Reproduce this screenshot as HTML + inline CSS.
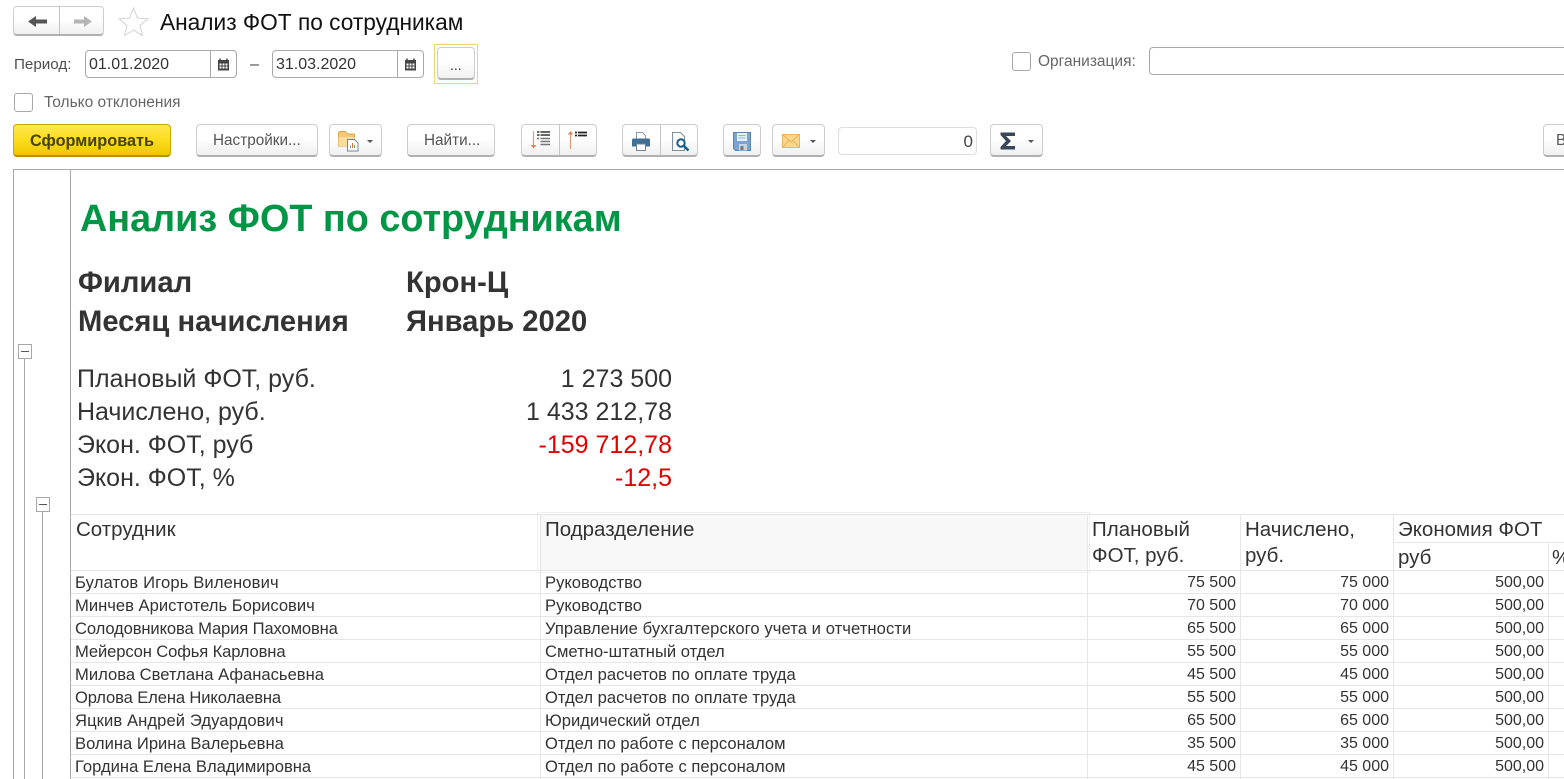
<!DOCTYPE html>
<html lang="ru"><head><meta charset="utf-8"><title>Анализ ФОТ по сотрудникам</title>
<style>
html,body{margin:0;padding:0;background:#fff;width:1564px;height:779px;overflow:hidden}
body{position:relative;font-family:"Liberation Sans",Arial,sans-serif;color:#333}
.t{position:absolute;white-space:nowrap;line-height:1}
.r{text-align:right}
.a{position:absolute;box-sizing:border-box}
.btn{position:absolute;box-sizing:border-box;border:1px solid #cdcdcd;border-bottom:2px solid #b0b0b0;border-radius:4px;background:linear-gradient(#fff 0,#fff 45%,#f0f0f0 100%);top:124px;height:33px}
.lbl{font-size:15.200px;color:#4d4d4d}
.inp{position:absolute;box-sizing:border-box;border:1px solid #a8a8a8;border-radius:4px;background:#fff}
.cb{position:absolute;box-sizing:border-box;border:1px solid #a8a8a8;border-radius:3px;background:#fff}
.h{position:absolute;background:#e6e6e6;height:1px}
.v{position:absolute;background:#e6e6e6;width:1px}
.row{font-size:16.600px;color:#333;margin-top:1px}
.num{font-size:16px;color:#333}
.hd{font-size:20.500px;color:#333;margin-top:1px}
.big{font-size:25px;color:#333}
.bold{font-size:29.200px;font-weight:bold;color:#333;margin-top:1px}
.red{color:#e00000}
svg{position:absolute;display:block}
.sep{position:absolute;top:125px;height:30px;width:1px;background:#c4c4c4}
</style></head><body>

<div class="btn" style="left:13px;top:6px;width:91px;height:30px"></div>
<div class="sep" style="left:59px;top:7px;height:27px"></div>
<svg style="left:28px;top:14px" width="20" height="15" viewBox="0 0 20 15"><path d="M0 7.500L8 2v3.500h11v4H8V13z" fill="#555"/></svg>
<svg style="left:73px;top:14px" width="20" height="15" viewBox="0 0 20 15"><path d="M19 7.500L11 2v3.500H1v4h10V13z" fill="#b5b5b5"/></svg>
<svg style="left:118px;top:7px" width="31" height="29" viewBox="0 0 31 29"><path d="M15.500 1l4 10 10.500 .8-8 6.800 2.500 10-9-5.500-9 5.500 2.500-10-8-6.800 10.500-.8z" fill="#fff" stroke="#d2d2d2"/></svg>
<div class="t" style="left:160px;top:11px;font-size:22.700px;color:#111">Анализ ФОТ по сотрудникам</div>

<div class="t lbl" style="left:14px;top:57px">Период:</div>
<div class="inp" style="left:85px;top:50px;width:152px;height:28px"></div>
<div class="a" style="left:210px;top:51px;width:1px;height:26px;background:#a8a8a8"></div>
<div class="t" style="left:89px;top:57px;font-size:16px;color:#333">01.01.2020</div>
<svg style="left:217px;top:58px" width="13" height="13" viewBox="0 0 13 13"><path d="M1 2h11v10.500H1z" fill="#444"/><path d="M3 .5v3M10 .5v3" stroke="#444" stroke-width="1.500"/><path d="M2.500 5.500h2v2h-2zM5.500 5.500h2v2h-2zM8.500 5.500h2v2h-2zM2.500 8.500h2v2h-2zM5.500 8.500h2v2h-2zM8.500 8.500h2v2h-2z" fill="#fff"/></svg>
<div class="t" style="left:250px;top:57px;font-size:16px;color:#444">–</div>
<div class="inp" style="left:272px;top:50px;width:152px;height:28px"></div>
<div class="a" style="left:397px;top:51px;width:1px;height:26px;background:#a8a8a8"></div>
<div class="t" style="left:276px;top:57px;font-size:16px;color:#333">31.03.2020</div>
<svg style="left:404px;top:58px" width="13" height="13" viewBox="0 0 13 13"><path d="M1 2h11v10.500H1z" fill="#444"/><path d="M3 .5v3M10 .5v3" stroke="#444" stroke-width="1.500"/><path d="M2.500 5.500h2v2h-2zM5.500 5.500h2v2h-2zM8.500 5.500h2v2h-2zM2.500 8.500h2v2h-2zM5.500 8.500h2v2h-2zM8.500 8.500h2v2h-2z" fill="#fff"/></svg>
<div class="a" style="left:434px;top:44px;width:44px;height:40px;border:1px solid #ecd96a"></div>
<div class="btn" style="left:437px;top:47px;width:38px;height:33px"></div>
<div class="t" style="left:450px;top:58px;font-size:14px;color:#333">...</div>

<div class="cb" style="left:1012px;top:52px;width:19px;height:19px"></div>
<div class="t lbl" style="left:1038px;top:54px;font-size:15.500px;color:#666">Организация:</div>
<div class="inp" style="left:1149px;top:47px;width:430px;height:28px"></div>

<div class="cb" style="left:14px;top:93px;width:19px;height:19px"></div>
<div class="t lbl" style="left:44px;top:95px;font-size:15.500px;color:#666">Только отклонения</div>

<div class="btn" style="left:13px;width:158px;border:1px solid #c9a800;border-bottom:2px solid #b39500;background:linear-gradient(#ffe94d 0,#fbdc1e 50%,#eec800 100%)"></div>
<div class="t" style="left:30px;top:133px;font-size:16.300px;font-weight:bold;color:#4b4200">Сформировать</div>
<div class="btn" style="left:196px;width:122px"></div>
<div class="t" style="left:213px;top:133px;font-size:15.300px;color:#555">Настройки...</div>
<div class="btn" style="left:329px;width:53px"></div>
<svg style="left:338px;top:130px" width="24" height="22" viewBox="0 0 24 22"><path d="M.5 3.500Q.5 1.500 2.500 1.500h5l2 2.500h7v12h-16z" fill="#f3c878" stroke="#dca54e"/><path d="M.5 7h16v9h-16z" fill="#f9dc9e"/><path d="M9.500 9.500h7l3.500 3.500v8h-10.500z" fill="#fff" stroke="#6f8494"/><path d="M12.500 18v-2.500" stroke="#5a8fb5"/><path d="M14.500 18v-5" stroke="#d0703c"/><path d="M16.500 18v-3" stroke="#7a9a50"/></svg>
<svg style="left:367px;top:140px" width="6" height="3" viewBox="0 0 6 3"><path d="M0 0h6L3 3z" fill="#555"/></svg>
<div class="btn" style="left:407px;width:88px"></div>
<div class="t" style="left:424px;top:133px;font-size:15.300px;color:#555">Найти...</div>

<div class="btn" style="left:521px;width:76px"></div>
<div class="sep" style="left:559px"></div>
<svg style="left:530px;top:130px" width="22" height="20" viewBox="0 0 22 20"><path d="M3.500 1v15" stroke="#e29b78" stroke-width="1.200"/><path d="M.8 15h5.400l-2.700 3.500z" fill="#dd8050"/><path d="M7 2h2.500M10.500 2H20M7 5h2.500M10.500 5H20" stroke="#333" stroke-width="1.600"/><path d="M7 8.500h2M10.500 8.500H20M10.500 11.500H20M10.500 14.500H20" stroke="#777" stroke-width="1.500"/></svg>
<svg style="left:567px;top:130px" width="22" height="20" viewBox="0 0 22 20"><path d="M3.500 3v16" stroke="#e29b78" stroke-width="1.200"/><path d="M.8 4.500h5.400L3.500 1z" fill="#dd8050"/><path d="M8 2.500h2M11 2.500h9M8 5.500h2M11 5.500h9" stroke="#222" stroke-width="1.700"/></svg>

<div class="btn" style="left:622px;width:76px"></div>
<div class="sep" style="left:660px"></div>
<svg style="left:631px;top:131px" width="20" height="21" viewBox="0 0 20 21"><path d="M5.500 1.500h6l3 3v4h-9z" fill="#fff" stroke="#8a9aa6"/><path d="M1 9q0-1.500 1.500-1.500h15Q19 7.500 19 9v6.500H1z" fill="#3f6f95"/><path d="M5.500 13h9v6.500h-9z" fill="#fff" stroke="#6d8494"/></svg>
<svg style="left:670px;top:131px" width="20" height="21" viewBox="0 0 20 21"><path d="M2.500 1.500h8l4 4v14h-12z" fill="#fff" stroke="#7d8f9c"/><circle cx="11" cy="12" r="3.700" fill="#fff" stroke="#135f8e" stroke-width="2"/><path d="M13.500 14.500l5 5" stroke="#135f8e" stroke-width="2.500"/></svg>

<div class="btn" style="left:723px;width:38px"></div>
<svg style="left:733px;top:132px" width="18" height="19" viewBox="0 0 18 19"><path d="M.5.500h17v18h-15l-2-2z" fill="#7ba5d0" stroke="#5a86ad"/><path d="M4 1h10v8H4z" fill="#e8f0f7"/><path d="M5.500 3.500h7M5.500 6h7" stroke="#9ab2c8"/><path d="M6 12h8v6.500H6z" fill="#c9d3db"/><path d="M7.500 14h3v4h-3z" fill="#6a7c8c"/></svg>
<div class="btn" style="left:772px;width:53px"></div>
<svg style="left:782px;top:134px" width="18" height="14" viewBox="0 0 18 14"><path d="M.5.500h17v13H.5z" fill="#fad78c" stroke="#e8b562"/><path d="M.5.500L9 8l8.500-7.500M.5 13.500L7 6.500M17.500 13.500L11 6.500" fill="none" stroke="#e8b562"/></svg>
<svg style="left:810px;top:140px" width="6" height="3" viewBox="0 0 6 3"><path d="M0 0h6L3 3z" fill="#555"/></svg>

<div class="inp" style="left:838px;top:127px;width:139px;height:28px;border-color:#dedede"></div>
<div class="t r" style="left:899px;width:74px;top:133px;font-size:17px;color:#444">0</div>
<div class="btn" style="left:990px;width:53px"></div>
<svg style="left:1000px;top:132px" width="16" height="18" viewBox="0 0 16 18"><path d="M.5.500h14.500v3.500H6l5 5-5 5h9v3.500H.5v-2.500L6 9 .5 3z" fill="#38485a"/></svg>
<svg style="left:1028px;top:140px" width="6" height="3" viewBox="0 0 6 3"><path d="M0 0h6L3 3z" fill="#555"/></svg>
<div class="btn" style="left:1543px;width:40px"></div>
<div class="t" style="left:1556px;top:133px;font-size:15.300px;color:#555">В</div>

<div class="a" style="left:13px;top:169px;width:1551px;height:1px;background:#a8a8a8"></div>
<div class="a" style="left:13px;top:169px;width:1px;height:610px;background:#a8a8a8"></div>
<div class="a" style="left:70px;top:169px;width:1px;height:610px;background:#a8a8a8"></div>

<div class="a" style="left:24px;top:358px;width:1px;height:421px;background:#a8a8a8"></div>
<div class="a" style="left:42px;top:511px;width:1px;height:268px;background:#a8a8a8"></div>
<div class="a" style="left:18px;top:344px;width:14px;height:15px;border:1px solid #a8a8a8;background:#fff"><div class="a" style="left:2px;top:6px;width:8px;height:1px;background:#555"></div></div>
<div class="a" style="left:36px;top:497px;width:14px;height:15px;border:1px solid #a8a8a8;background:#fff"><div class="a" style="left:2px;top:6px;width:8px;height:1px;background:#555"></div></div>

<div class="t" style="left:80px;top:201px;font-size:37.800px;font-weight:bold;color:#009646">Анализ ФОТ по сотрудникам</div>
<div class="t bold" style="left:78px;top:268px">Филиал</div>
<div class="t bold" style="left:406px;top:268px">Крон-Ц</div>
<div class="t bold" style="left:78px;top:307px">Месяц начисления</div>
<div class="t bold" style="left:406px;top:307px">Январь 2020</div>

<div class="t big" style="left:77px;top:367px">Плановый ФОТ, руб.</div>
<div class="t big r" style="left:372px;width:300px;top:367px">1 273 500</div>
<div class="t big" style="left:77px;top:400px">Начислено, руб.</div>
<div class="t big r" style="left:372px;width:300px;top:400px">1 433 212,78</div>
<div class="t big" style="left:77px;top:433px">Экон. ФОТ, руб</div>
<div class="t big r red" style="left:372px;width:300px;top:433px">-159 712,78</div>
<div class="t big" style="left:77px;top:466px">Экон. ФОТ, %</div>
<div class="t big r red" style="left:372px;width:300px;top:466px">-12,5</div>

<!-- grid -->
<div class="a" style="left:537px;top:512px;width:553px;height:61px;border:1px solid #efefef"></div>
<div class="a" style="left:540px;top:514px;width:547px;height:56px;background:#f8f8f8"></div>
<div class="h" style="left:71px;top:514px;width:1493px"></div>
<div class="h" style="left:1393px;top:542px;width:171px"></div>
<div class="h" style="left:71px;top:570px;width:1493px"></div>
<div class="h" style="left:71px;top:593px;width:1493px"></div>
<div class="h" style="left:71px;top:616px;width:1493px"></div>
<div class="h" style="left:71px;top:639px;width:1493px"></div>
<div class="h" style="left:71px;top:662px;width:1493px"></div>
<div class="h" style="left:71px;top:685px;width:1493px"></div>
<div class="h" style="left:71px;top:708px;width:1493px"></div>
<div class="h" style="left:71px;top:731px;width:1493px"></div>
<div class="h" style="left:71px;top:754px;width:1493px"></div>
<div class="h" style="left:71px;top:777px;width:1493px"></div>
<div class="v" style="left:540px;top:514px;height:265px"></div>
<div class="v" style="left:1087px;top:514px;height:265px"></div>
<div class="v" style="left:1240px;top:514px;height:265px"></div>
<div class="v" style="left:1393px;top:514px;height:265px"></div>
<div class="v" style="left:1548px;top:542px;height:237px"></div>

<div class="t hd" style="left:76px;top:519px">Сотрудник</div>
<div class="t hd" style="left:545px;top:519px">Подразделение</div>
<div class="t hd" style="left:1092px;top:519px">Плановый</div>
<div class="t hd" style="left:1092px;top:545px">ФОТ, руб.</div>
<div class="t hd" style="left:1245px;top:519px">Начислено,</div>
<div class="t hd" style="left:1245px;top:545px">руб.</div>
<div class="t hd" style="left:1398px;top:519px">Экономия ФОТ</div>
<div class="t hd" style="left:1398px;top:547px">руб</div>
<div class="t hd" style="left:1552px;top:547px">%</div>

<div class="t row" style="left:75px;top:574px;letter-spacing:.13px">Булатов Игорь Виленович</div><div class="t row" style="left:545px;top:574px">Руководство</div><div class="t num r" style="left:1136px;width:100px;top:575px">75 500</div><div class="t num r" style="left:1289px;width:100px;top:575px">75 000</div><div class="t num r" style="left:1444px;width:100px;top:575px">500,00</div>
<div class="t row" style="left:75px;top:597px">Минчев Аристотель Борисович</div><div class="t row" style="left:545px;top:597px">Руководство</div><div class="t num r" style="left:1136px;width:100px;top:598px">70 500</div><div class="t num r" style="left:1289px;width:100px;top:598px">70 000</div><div class="t num r" style="left:1444px;width:100px;top:598px">500,00</div>
<div class="t row" style="left:75px;top:620px;letter-spacing:-.13px">Солодовникова Мария Пахомовна</div><div class="t row" style="left:545px;top:620px;letter-spacing:.07px">Управление бухгалтерского учета и отчетности</div><div class="t num r" style="left:1136px;width:100px;top:621px">65 500</div><div class="t num r" style="left:1289px;width:100px;top:621px">65 000</div><div class="t num r" style="left:1444px;width:100px;top:621px">500,00</div>
<div class="t row" style="left:75px;top:643px;letter-spacing:-.13px">Мейерсон Софья Карловна</div><div class="t row" style="left:545px;top:643px">Сметно-штатный отдел</div><div class="t num r" style="left:1136px;width:100px;top:644px">55 500</div><div class="t num r" style="left:1289px;width:100px;top:644px">55 000</div><div class="t num r" style="left:1444px;width:100px;top:644px">500,00</div>
<div class="t row" style="left:75px;top:666px">Милова Светлана Афанасьевна</div><div class="t row" style="left:545px;top:666px">Отдел расчетов по оплате труда</div><div class="t num r" style="left:1136px;width:100px;top:667px">45 500</div><div class="t num r" style="left:1289px;width:100px;top:667px">45 000</div><div class="t num r" style="left:1444px;width:100px;top:667px">500,00</div>
<div class="t row" style="left:75px;top:689px;letter-spacing:-.13px">Орлова Елена Николаевна</div><div class="t row" style="left:545px;top:689px">Отдел расчетов по оплате труда</div><div class="t num r" style="left:1136px;width:100px;top:690px">55 500</div><div class="t num r" style="left:1289px;width:100px;top:690px">55 000</div><div class="t num r" style="left:1444px;width:100px;top:690px">500,00</div>
<div class="t row" style="left:75px;top:712px;letter-spacing:.09px">Яцкив Андрей Эдуардович</div><div class="t row" style="left:545px;top:712px">Юридический отдел</div><div class="t num r" style="left:1136px;width:100px;top:713px">65 500</div><div class="t num r" style="left:1289px;width:100px;top:713px">65 000</div><div class="t num r" style="left:1444px;width:100px;top:713px">500,00</div>
<div class="t row" style="left:75px;top:735px">Волина Ирина Валерьевна</div><div class="t row" style="left:545px;top:735px">Отдел по работе с персоналом</div><div class="t num r" style="left:1136px;width:100px;top:736px">35 500</div><div class="t num r" style="left:1289px;width:100px;top:736px">35 000</div><div class="t num r" style="left:1444px;width:100px;top:736px">500,00</div>
<div class="t row" style="left:75px;top:758px">Гордина Елена Владимировна</div><div class="t row" style="left:545px;top:758px">Отдел по работе с персоналом</div><div class="t num r" style="left:1136px;width:100px;top:759px">45 500</div><div class="t num r" style="left:1289px;width:100px;top:759px">45 000</div><div class="t num r" style="left:1444px;width:100px;top:759px">500,00</div>
</body></html>
